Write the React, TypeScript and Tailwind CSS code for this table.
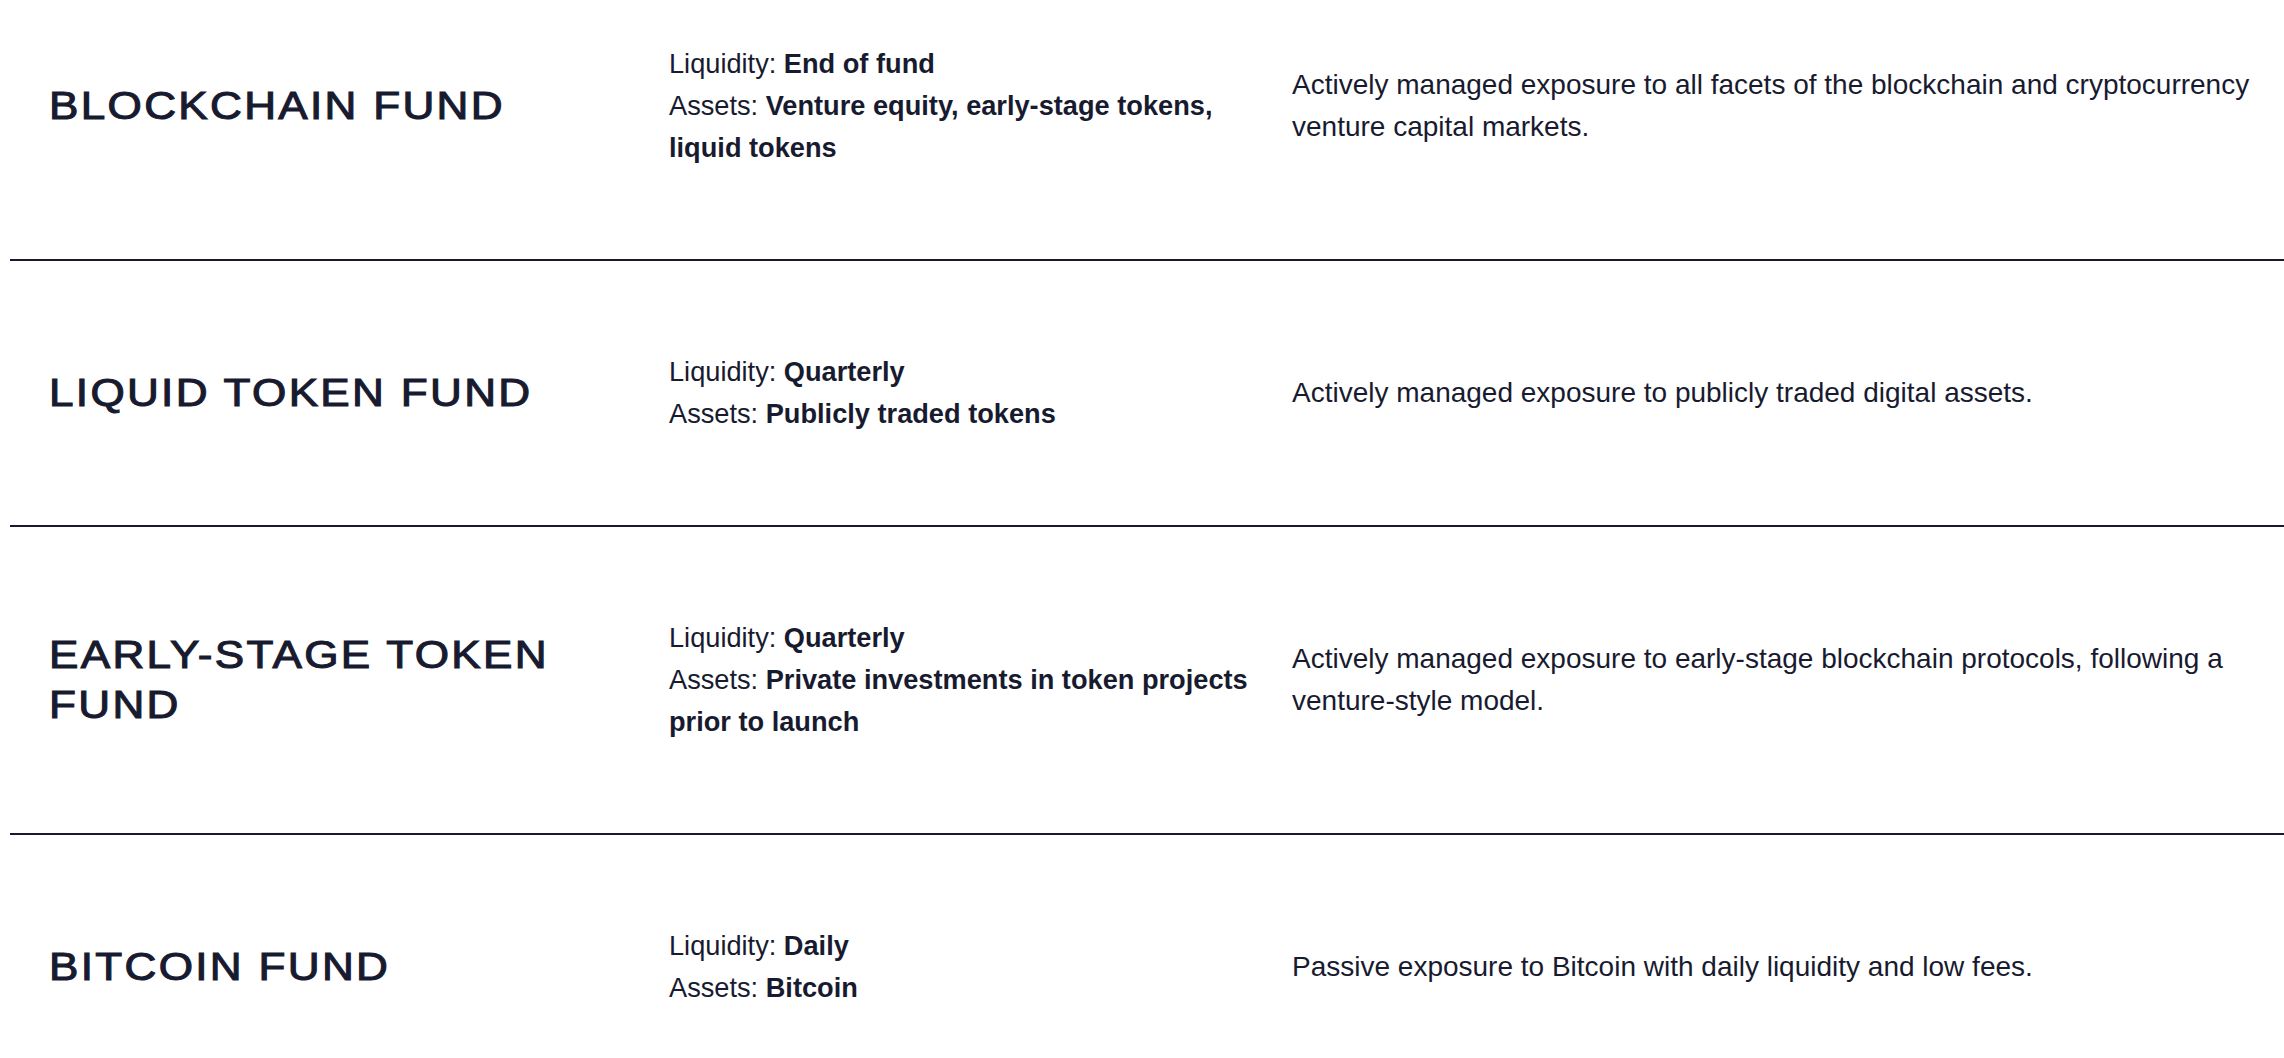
import React from "react";

const funds = [
  {
    name: "BLOCKCHAIN FUND",
    liquidity: "End of fund",
    assets: "Venture equity, early-stage tokens, liquid tokens",
    desc: "Actively managed exposure to all facets of the blockchain and cryptocurrency venture capital markets.",
  },
  {
    name: "LIQUID TOKEN FUND",
    liquidity: "Quarterly",
    assets: "Publicly traded tokens",
    desc: "Actively managed exposure to publicly traded digital assets.",
  },
  {
    name: "EARLY-STAGE TOKEN FUND",
    liquidity: "Quarterly",
    assets: "Private investments in token projects prior to launch",
    desc: "Actively managed exposure to early-stage blockchain protocols, following a venture-style model.",
  },
  {
    name: "BITCOIN FUND",
    liquidity: "Daily",
    assets: "Bitcoin",
    desc: "Passive exposure to Bitcoin with daily liquidity and low fees.",
  },
];

export default function App() {
  return (
    <div className="min-h-screen overflow-hidden bg-white text-[#181b2f] font-['Liberation_Sans',Arial,sans-serif]">
      <div className="-mt-[47px] ml-[10px]">
        {funds.map((f, i) => (
          <div
            key={f.name}
            className={`flex items-center py-[90px] pl-[39px] ${i < funds.length - 1 ? "border-b-2 border-[#181b2f]" : ""}`}
          >
            <div className="w-[620px] shrink-0">
              <h2 className="w-[510px] origin-left scale-x-[1.13] text-[39px] font-normal leading-[50px] tracking-[2.05px] [-webkit-text-stroke:1.1px_#181b2f]">
                {f.name}
              </h2>
            </div>
            <div className="w-[623px] shrink-0 pr-[30px] text-[27.2px] leading-[42px]">
              <p>
                Liquidity: <span className="font-bold">{f.liquidity}</span>
              </p>
              <p>
                Assets: <span className="font-bold">{f.assets}</span>
              </p>
            </div>
            <div className="flex-1 text-[28px] leading-[42px]">
              <p>{f.desc}</p>
            </div>
          </div>
        ))}
      </div>
    </div>
  );
}
